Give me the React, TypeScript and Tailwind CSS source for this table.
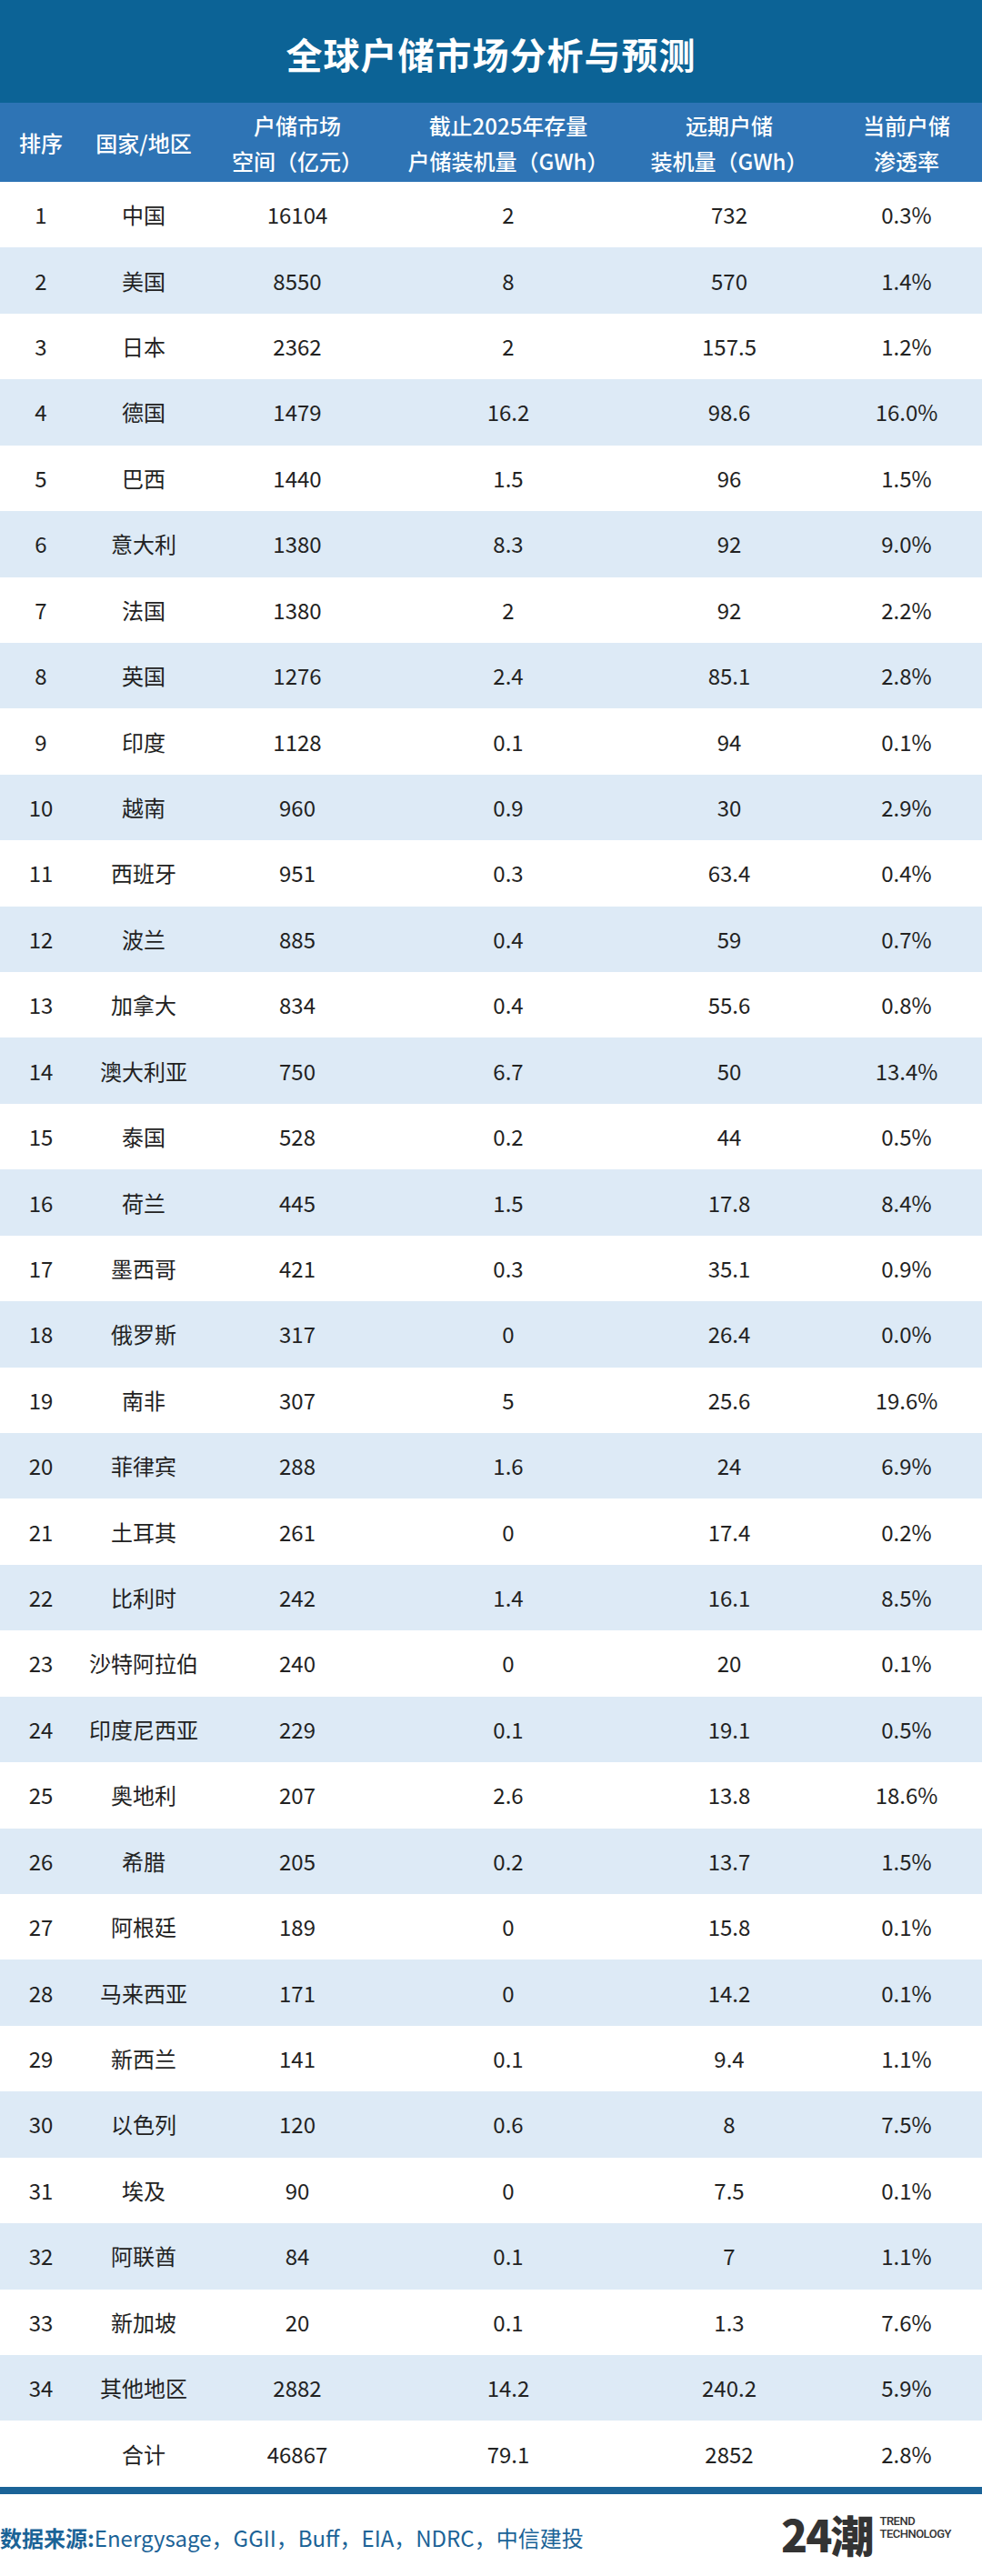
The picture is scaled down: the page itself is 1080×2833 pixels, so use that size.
const rows: [string, string, string, string, string, string][] = [
  ["1", "中国", "16104", "2", "732", "0.3%"],
  ["2", "美国", "8550", "8", "570", "1.4%"],
  ["3", "日本", "2362", "2", "157.5", "1.2%"],
  ["4", "德国", "1479", "16.2", "98.6", "16.0%"],
  ["5", "巴西", "1440", "1.5", "96", "1.5%"],
  ["6", "意大利", "1380", "8.3", "92", "9.0%"],
  ["7", "法国", "1380", "2", "92", "2.2%"],
  ["8", "英国", "1276", "2.4", "85.1", "2.8%"],
  ["9", "印度", "1128", "0.1", "94", "0.1%"],
  ["10", "越南", "960", "0.9", "30", "2.9%"],
  ["11", "西班牙", "951", "0.3", "63.4", "0.4%"],
  ["12", "波兰", "885", "0.4", "59", "0.7%"],
  ["13", "加拿大", "834", "0.4", "55.6", "0.8%"],
  ["14", "澳大利亚", "750", "6.7", "50", "13.4%"],
  ["15", "泰国", "528", "0.2", "44", "0.5%"],
  ["16", "荷兰", "445", "1.5", "17.8", "8.4%"],
  ["17", "墨西哥", "421", "0.3", "35.1", "0.9%"],
  ["18", "俄罗斯", "317", "0", "26.4", "0.0%"],
  ["19", "南非", "307", "5", "25.6", "19.6%"],
  ["20", "菲律宾", "288", "1.6", "24", "6.9%"],
  ["21", "土耳其", "261", "0", "17.4", "0.2%"],
  ["22", "比利时", "242", "1.4", "16.1", "8.5%"],
  ["23", "沙特阿拉伯", "240", "0", "20", "0.1%"],
  ["24", "印度尼西亚", "229", "0.1", "19.1", "0.5%"],
  ["25", "奥地利", "207", "2.6", "13.8", "18.6%"],
  ["26", "希腊", "205", "0.2", "13.7", "1.5%"],
  ["27", "阿根廷", "189", "0", "15.8", "0.1%"],
  ["28", "马来西亚", "171", "0", "14.2", "0.1%"],
  ["29", "新西兰", "141", "0.1", "9.4", "1.1%"],
  ["30", "以色列", "120", "0.6", "8", "7.5%"],
  ["31", "埃及", "90", "0", "7.5", "0.1%"],
  ["32", "阿联酋", "84", "0.1", "7", "1.1%"],
  ["33", "新加坡", "20", "0.1", "1.3", "7.6%"],
  ["34", "其他地区", "2882", "14.2", "240.2", "5.9%"],
  ["", "合计", "46867", "79.1", "2852", "2.8%"],
];

// column widths measured from the picture
const cols = "grid grid-cols-[90px_136px_202px_262px_224px_166px]";

export default function App() {
  return (
    <div className="w-[1080px] h-[2833px] bg-white font-['Noto_Sans_CJK_SC','Noto_Sans',sans-serif] text-[#222]">
      {/* 标题 */}
      <div className="h-[113px] bg-[#0c6396] flex items-center justify-center">
        <h1 className="text-white text-[40px] font-bold tracking-[1px] pt-[4px]">全球户储市场分析与预测</h1>
      </div>

      {/* 表头 */}
      <div className={`${cols} h-[87px] bg-[#2e74b5] text-white text-[24px] font-medium leading-[39px] text-center items-center`}>
        <div>排序</div>
        <div>国家/地区</div>
        <div>户储市场<br />空间（亿元）</div>
        <div>截止2025年存量<br />户储装机量（GWh）</div>
        <div>远期户储<br />装机量（GWh）</div>
        <div>当前户储<br />渗透率</div>
      </div>

      {/* 数据 */}
      <div>
        {rows.map((r, i) => (
          <div
            key={i}
            className={`${cols} h-[72.43px] items-center text-center text-[24px] ${i % 2 === 1 ? "bg-[#ddeaf6]" : "bg-white"}`}
          >
            {r.map((c, j) => (
              <div key={j}>{c}</div>
            ))}
          </div>
        ))}
      </div>

      <div className="h-[8px] bg-[#1b6397]" />

      {/* 数据来源 + logo */}
      <div className="h-[90px] flex items-center justify-between pr-[34px]">
        <p className="text-[24px] text-[#1b6397] pt-[6px]">
          <span className="font-bold">数据来源:</span>Energysage，GGII，Buff，EIA，NDRC，中信建投
        </p>
        <div className="flex items-start gap-[8px] text-[#333] pb-[4px]">
          <span className="text-[48px] leading-[48px] font-black tracking-[-2px]">24潮</span>
          <div className="font-['Roboto',sans-serif] text-[13px] leading-[14px] font-medium tracking-[-0.5px] pt-[4px]">
            <div>TREND</div>
            <div>TECHNOLOGY</div>
          </div>
        </div>
      </div>
    </div>
  );
}
